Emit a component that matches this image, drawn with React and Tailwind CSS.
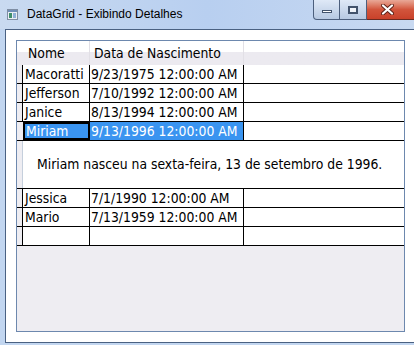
import React from "react";

const rows = [
  ["Macoratti", "9/23/1975 12:00:00 AM"],
  ["Jefferson", "7/10/1992 12:00:00 AM"],
  ["Janice", "8/13/1994 12:00:00 AM"],
];
const rowsAfter = [
  ["Jessica", "7/1/1990 12:00:00 AM"],
  ["Mario", "7/13/1959 12:00:00 AM"],
  ["", ""],
];

function AppIcon() {
  return (
    <svg width="11" height="11" viewBox="0 0 11 11" className="shrink-0">
      <rect x="0.5" y="0.5" width="10" height="10" fill="#e9eef4" stroke="#7f8ea3" />
      <rect x="1" y="1" width="9" height="2" fill="#6f8fb8" />
      <rect x="2" y="4" width="3" height="5" fill="#3f8f6c" />
      <rect x="6" y="4" width="3" height="5" fill="#8fb0d8" />
    </svg>
  );
}

function Row({ name, date }) {
  return (
    <div className="flex h-[19px] border-b border-black">
      <div className="w-[6px] shrink-0 bg-[#eeedf2] border-r border-black" />
      <div className="w-[67px] shrink-0 border-r border-black pl-[2px] leading-[18px] whitespace-nowrap overflow-hidden">{name}</div>
      <div className="w-[154px] shrink-0 border-r border-black pl-[1px] leading-[18px] whitespace-nowrap overflow-hidden">{date}</div>
      <div className="flex-1" />
    </div>
  );
}

export default function App() {
  return (
    <div
      className="w-[414px] h-[345px] overflow-hidden flex flex-col bg-[#c2d6f0] text-[13.8px] text-black"
      style={{ fontFamily: "'DejaVu Sans Condensed', 'Liberation Sans', sans-serif" }}
    >
      {/* title bar */}
      <div className="h-[29px] shrink-0 flex items-start bg-gradient-to-r from-[#c9daf0] via-[#b8cff0] to-[#c8d9f1]">
        <div className="flex items-center gap-[9px] pl-[7px] pt-[8px]">
          <AppIcon />
          <span
            className="text-[12px] text-black leading-none"
            style={{ fontFamily: "'Liberation Sans', Arial, sans-serif" }}
          >
            DataGrid - Exibindo Detalhes
          </span>
        </div>
        <div className="ml-auto flex h-[20px]">
          <div className="w-[27px] h-[20px] border border-[#4c5f7d] border-t-0 rounded-bl-[4px] bg-gradient-to-b from-[#dfe9f7] to-[#b7c9e2] flex items-center justify-center">
            <div className="w-[10px] h-[3px] bg-white border border-[#42536c] mt-[4px]" />
          </div>
          <div className="w-[27px] h-[20px] border-b border-r border-[#4c5f7d] bg-gradient-to-b from-[#dfe9f7] to-[#b7c9e2] flex items-center justify-center">
            <div className="w-[10px] h-[8px] border-[2px] border-[#42536c] bg-white/70" />
          </div>
          <div className="w-[47px] h-[20px] border-b border-[#6b2a20] bg-gradient-to-b from-[#e8a897] via-[#d2553c] to-[#c9412a] flex items-center justify-center pr-[7px]">
            <svg width="13" height="11" viewBox="0 0 13 11">
              <path d="M2 1.5 L11 9.5 M11 1.5 L2 9.5" stroke="#5b2016" strokeWidth="4" strokeLinecap="round" />
              <path d="M2 1.5 L11 9.5 M11 1.5 L2 9.5" stroke="#ffffff" strokeWidth="2.2" strokeLinecap="round" />
            </svg>
          </div>
        </div>
      </div>

      {/* client area */}
      <div className="flex-1 ml-[5px] mb-[2px] border-l border-t border-b border-[#4a6182] bg-white pl-[10px] pt-[10px] pb-[10px]">
        <div className="w-[389px] h-[292px] border border-[#6d88ae] bg-[#eeedf2] flex flex-col">
          {/* header */}
          <div className="flex h-[24px] bg-gradient-to-b from-white from-45% to-[#eceaf0] to-45%">
            <div className="w-[6px] shrink-0" />
            <div className="w-[67px] shrink-0 border-r border-[#e2e0e6] pl-[5px] leading-[24px]">Nome</div>
            <div className="w-[154px] shrink-0 border-r border-[#e2e0e6] pl-[4px] leading-[24px] whitespace-nowrap">Data de Nascimento</div>
            <div className="flex-1" />
          </div>
          <div className="bg-white">
            {rows.map((r) => (
              <Row key={r[0]} name={r[0]} date={r[1]} />
            ))}
            {/* selected row */}
            <div className="flex h-[19px] border-b border-black">
              <div className="w-[6px] shrink-0 bg-[#eeedf2]" />
              <div className="w-[67px] shrink-0 border-2 border-black bg-[#3a94f0] text-white pl-[1px] leading-[15px]">Miriam</div>
              <div className="w-[154px] shrink-0 border-r border-black bg-[#3a94f0] text-white pl-[1px] leading-[18px] whitespace-nowrap">9/13/1996 12:00:00 AM</div>
              <div className="flex-1" />
            </div>
            {/* details */}
            <div className="flex h-[48px] border-b border-black">
              <div className="w-[6px] shrink-0 bg-[#eeedf2] border-r border-[#c5cfdc]" />
              <div className="flex-1 pl-[14px] pt-[14px] leading-[18px] whitespace-nowrap">
                Miriam nasceu na sexta-feira, 13 de setembro de 1996.
              </div>
            </div>
            {rowsAfter.map((r, i) => (
              <Row key={i} name={r[0]} date={r[1]} />
            ))}
          </div>
          <div className="flex-1" />
        </div>
      </div>
    </div>
  );
}
